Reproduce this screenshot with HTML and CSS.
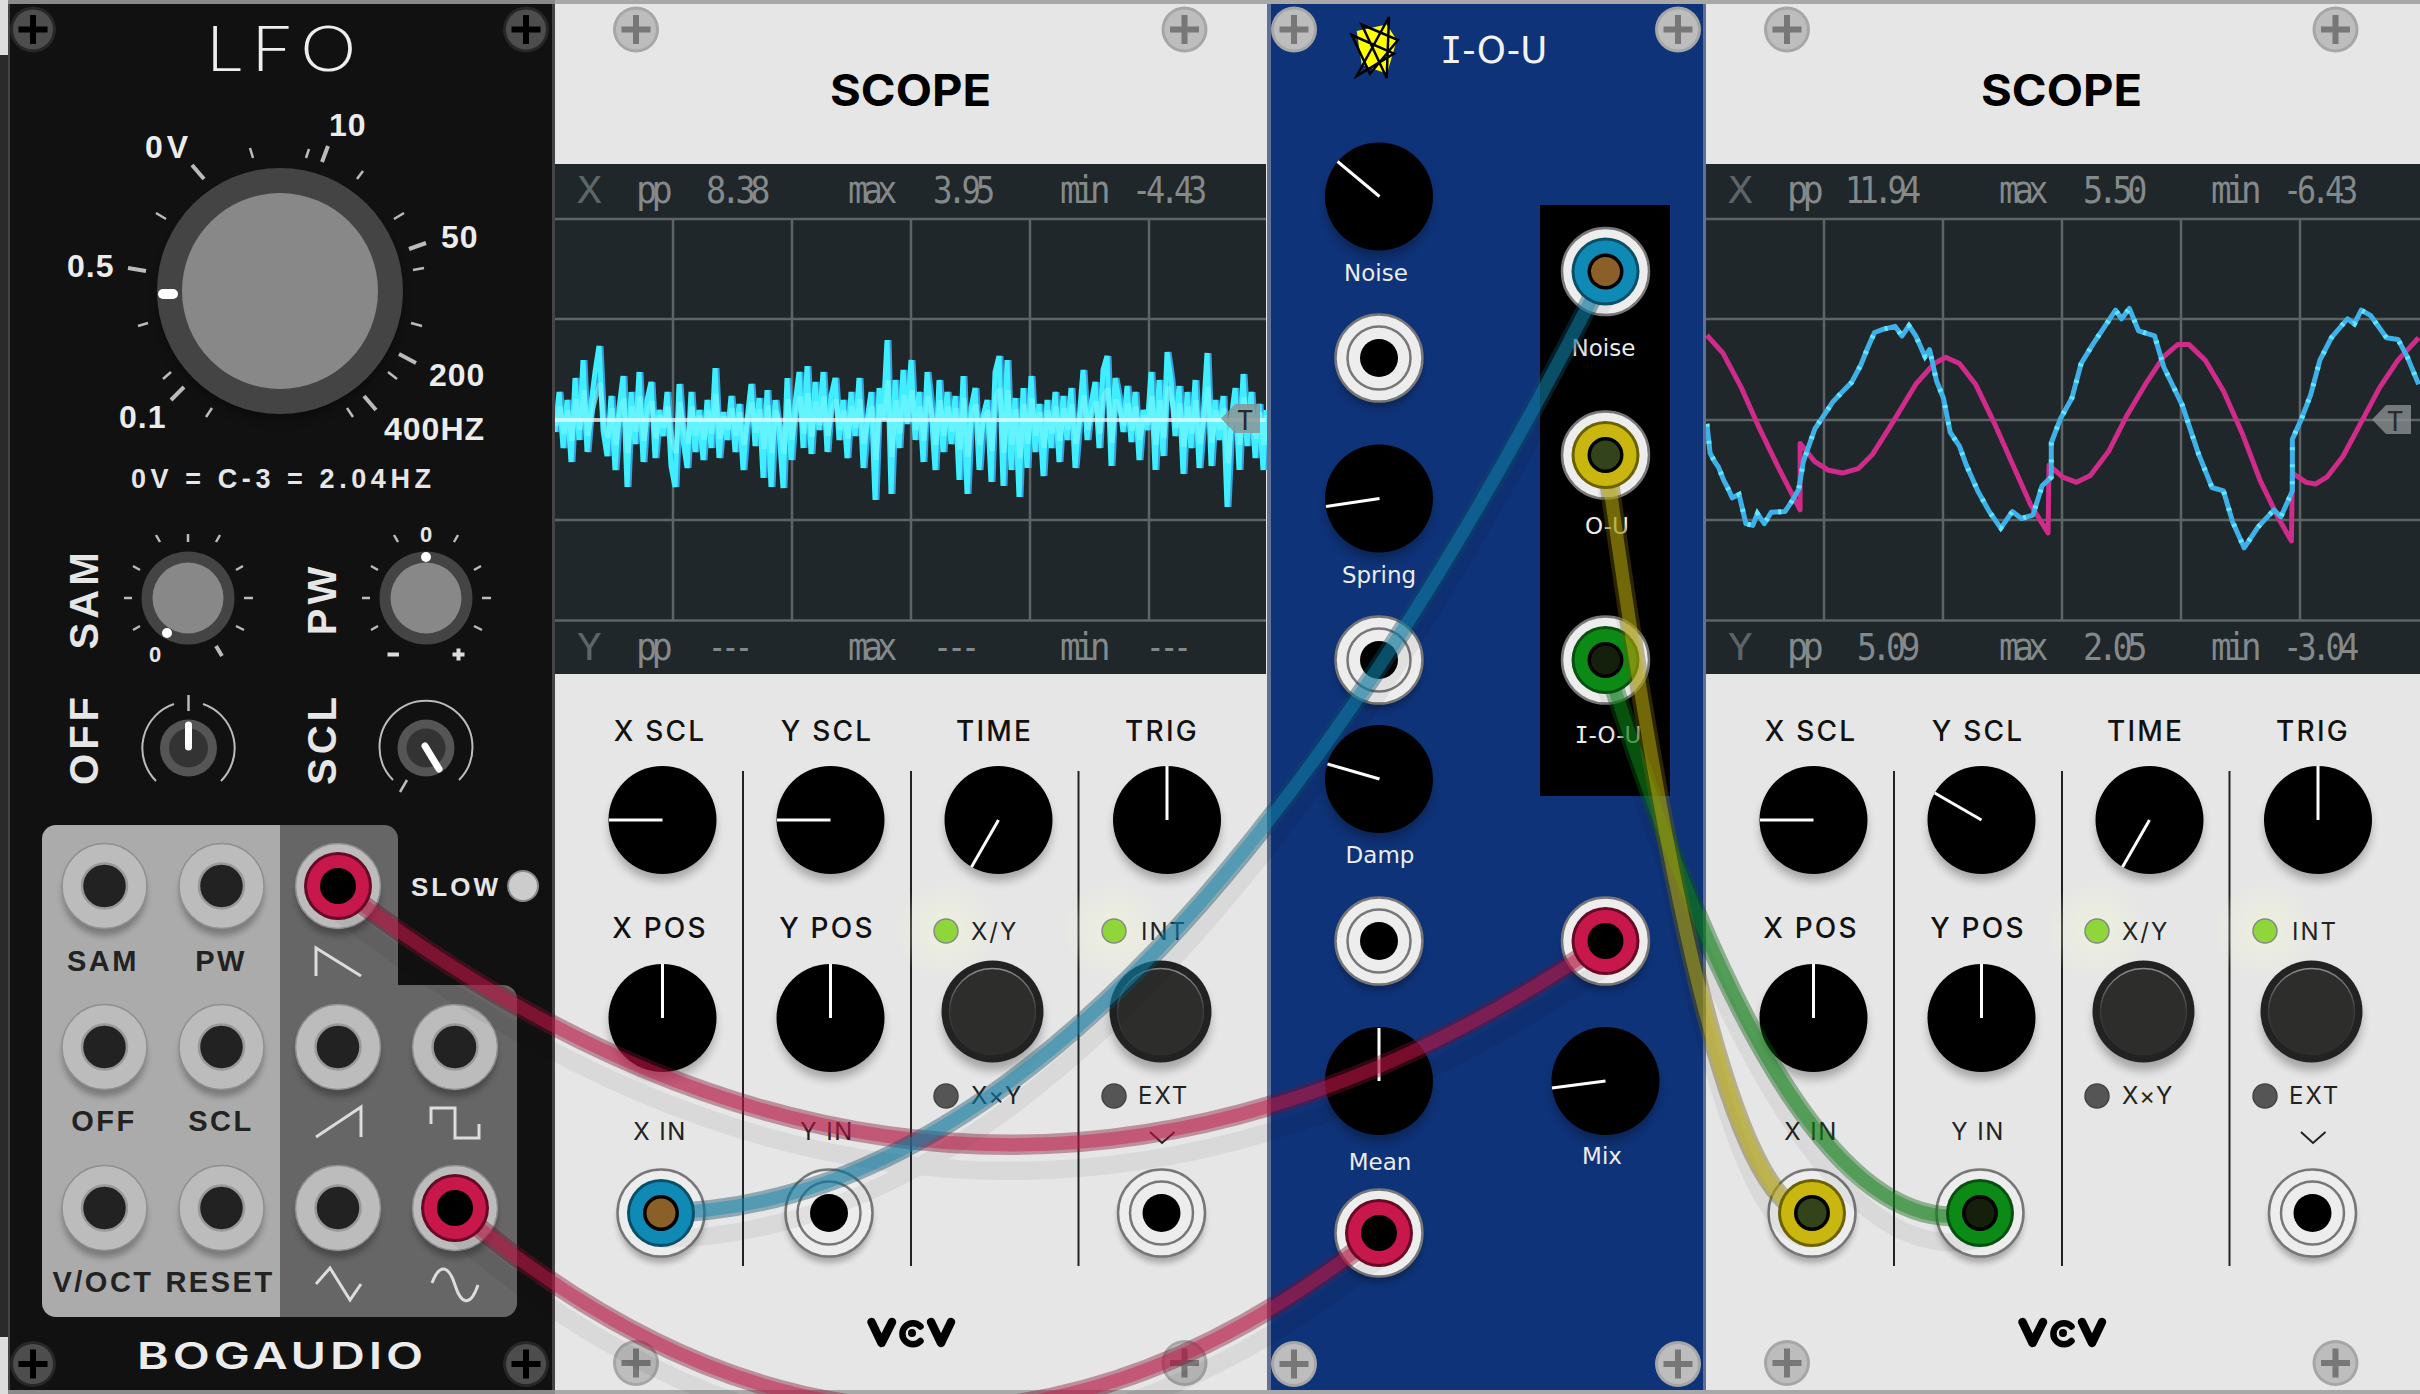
FILE: index.html
```html
<!DOCTYPE html>
<html lang="en">
<head>
<meta charset="utf-8">
<title>VCV Rack patch</title>
<link rel="stylesheet" href="styles.css">
</head>
<body>
<svg class="defs" aria-hidden="true">
  <defs>
    <filter id="blur" x="-40%" y="-40%" width="180%" height="180%"><feGaussianBlur stdDeviation="5"/></filter>
    <filter id="blur2" x="-40%" y="-40%" width="180%" height="180%"><feGaussianBlur stdDeviation="3"/></filter>
    <radialGradient id="glow"><stop offset="0" stop-color="#f2f7d8" stop-opacity=".6"/><stop offset="1" stop-color="#f2f7d8" stop-opacity="0"/></radialGradient>
    <linearGradient id="ring" x1="0" y1="0" x2="0" y2="1"><stop offset="0" stop-color="#8a8a8a"/><stop offset=".5" stop-color="#3a3a3a"/><stop offset="1" stop-color="#2d2e2c"/></linearGradient>
    <g id="screw-dark"><circle class="sd-o" r="23"/><circle class="sd-i" r="20"/><path class="sd-x" d="M-14.500 0H14.500M0-14.500V14.500"/></g>
    <g id="screw-light"><circle class="sl-o" r="23"/><circle class="sl-i" r="20"/><path class="sl-x" d="M-14.500 0H14.500M0-14.500V14.500"/></g>
    <g id="jack-lfo"><circle class="shade" cy="8" r="42" filter="url(#blur2)"/><circle class="jl-o" r="42.500"/><circle class="jl-r" r="22.500"/></g>
    <g id="knob"><circle class="shade" cy="8" r="53" filter="url(#blur)"/><circle class="knob" r="54"/></g>
    <g id="jack"><circle class="shade" cy="7" r="43" filter="url(#blur2)"/><circle class="j-o" r="43.500"/><circle class="j-r" r="31.500"/><circle class="j-h" r="19"/></g>
    <g id="button"><circle class="shade" cy="9" r="50" filter="url(#blur)"/><circle class="b-o" r="51"/><circle class="b-i" r="43" stroke="url(#ring)"/></g>
    <g id="led-on"><circle r="52" fill="url(#glow)"/><circle class="led-on" r="12"/></g>
    <g id="plug-red"><circle class="p-red-e" r="34"/><circle class="p-red" r="31"/><circle class="p-hole" r="18"/></g>
    <g id="plug-blue"><circle class="p-blue-e" r="34"/><circle class="p-blue" r="31"/><circle class="p-hole" r="18"/><circle class="p-brown" r="14.500"/></g>
    <g id="plug-yellow"><circle class="p-yel-e" r="34"/><circle class="p-yel" r="31"/><circle class="p-hole" r="18"/><circle class="p-olive" r="14.500"/></g>
    <g id="plug-green"><circle class="p-grn-e" r="34"/><circle class="p-grn" r="31"/><circle class="p-hole" r="18"/><circle class="p-dk" r="14.500"/></g>
    <g id="vcv"><path class="logo" d="M871.500 1322L881.500 1343L892 1322"/><path class="logo-c" d="M920.500 1326.500A10.500 10.500 0 1 0 920.500 1341"/><circle class="logo-d" cx="912" cy="1333" r="4"/><path class="logo" d="M931 1322L941 1343L951 1322"/></g>
    <polyline id="noise-line" points="555,432 559,392 563,448 567,400 571,462 575,378 579,440 583,360 587,452 591,404 595,372 599,346 603,430 607,456 611,396 615,470 619,408 623,376 627,487 631,392 635,444 639,372 643,462 647,400 651,382 655,458 659,410 663,436 667,392 671,466 675,487 679,384 683,440 687,468 691,392 695,452 699,410 703,460 707,400 711,448 715,368 719,458 723,412 727,440 731,396 735,452 739,404 743,470 747,420 751,384 755,446 759,398 763,478 767,390 771,487 775,400 779,430 783,488 787,378 791,460 795,404 799,372 803,448 807,366 811,454 815,382 819,430 823,372 827,452 831,396 835,378 839,440 843,400 847,458 851,392 855,436 859,378 863,468 867,420 871,392 875,500 879,388 883,420 887,340 891,494 895,380 899,448 903,370 907,424 911,360 915,440 919,392 923,462 927,372 931,408 935,470 939,380 943,452 947,392 951,444 955,396 959,480 963,376 967,494 971,408 975,388 979,470 983,416 987,400 991,482 995,372 999,356 1003,486 1007,360 1011,470 1015,398 1019,497 1023,388 1027,468 1031,376 1035,452 1039,404 1043,476 1047,400 1051,448 1055,392 1059,462 1063,396 1067,440 1071,388 1075,468 1079,420 1083,370 1087,440 1091,404 1095,382 1099,448 1103,370 1107,356 1111,466 1115,378 1119,400 1123,432 1127,386 1131,442 1135,392 1139,460 1143,410 1147,430 1151,372 1155,470 1159,380 1163,456 1167,352 1171,380 1175,436 1179,386 1183,474 1187,392 1191,448 1195,380 1199,468 1203,420 1207,353 1211,466 1215,400 1219,440 1223,396 1227,507 1231,420 1235,388 1239,470 1243,374 1247,446 1251,392 1255,458 1259,404 1263,470 1266,410"/>
  </defs>
</svg>

<main class="rack">
  <section class="module lfo">
    <svg class="panel" viewBox="8 0 547 1394" width="547" height="1394">
      <use href="#screw-dark" x="33" y="29.500"/><use href="#screw-dark" x="526" y="29.500"/>
      <use href="#screw-dark" x="33" y="1364"/><use href="#screw-dark" x="526" y="1364"/>
      <text class="t-title" x="206" y="71" textLength="160" lengthAdjust="spacingAndGlyphs">LFO</text>
      <path class="tick" d="M250 148L253 158M309 149L306 158M363 171L357 179M404 213L394 219M424 268L413 270M422 326L411 323M397 379L388 372M353 417L347 408M212 408L206 417M171 372L163 379M148 323L138 326M166 219L156 213"/>
      <path class="tick-m" d="M192 165L204 179M328 146L322 162M426 243L409 249M416 363L399 354M376 410L364 396M184 387L171 400M146 271L128 268"/>
      <circle class="shade" cx="280" cy="299" r="122" filter="url(#blur)"/>
      <circle class="k-o" cx="280" cy="291" r="123"/><circle class="k-i" cx="280" cy="291" r="98"/>
      <rect class="k-p" x="158" y="289" width="20" height="10" rx="5"/>
      <text class="t-lab" x="145" y="158" textLength="44">0V</text><text class="t-lab" x="329" y="136">10</text>
      <text class="t-lab" x="67" y="277">0.5</text><text class="t-lab" x="441" y="248">50</text>
      <text class="t-lab" x="429" y="386">200</text><text class="t-lab" x="119" y="428">0.1</text>
      <text class="t-lab" x="384" y="440">400HZ</text>
      <text class="t-eq" x="131" y="488" textLength="300">0V = C-3 = 2.04HZ</text>

      <text class="t-side" transform="translate(98 599) rotate(-90)">SAM</text>
      <text class="t-side" transform="translate(336 599) rotate(-90)">PW</text>
      <text class="t-side" transform="translate(98 739) rotate(-90)">OFF</text>
      <text class="t-side" transform="translate(336 739) rotate(-90)">SCL</text>

      <path class="tick" d="M188 534V542M216 542L220 535M236 570L243 566M244 598H253M236 626L244 630M160 542L156 535M140 570L133 566M132 598H124M140 626L133 630"/>
      <path class="tick-m" d="M216 646L222 656"/>
      <circle class="k-o" cx="188" cy="598" r="46.500"/><circle class="k-i" cx="188" cy="598" r="35.500"/>
      <circle class="k-dot" cx="167" cy="633" r="5"/>
      <text class="t-s" x="155" y="662">0</text>

      <path class="tick" d="M454 542L458 535M474 570L481 566M482 598H491M474 626L482 630M398 542L394 535M378 570L371 566M370 598H362M378 626L371 630"/>
      <circle class="k-o" cx="426" cy="598" r="46.500"/><circle class="k-i" cx="426" cy="598" r="35.500"/>
      <circle class="k-dot" cx="426" cy="557" r="5"/>
      <text class="t-s" x="426" y="542">0</text>
      <path class="t-pm" d="M387.500 654.500H399M452.500 654.500H464.500M458.500 648.500V660.500"/>

      <path class="arc" d="M174 704A46.500 46.500 0 0 0 156 781M203 704A46.500 46.500 0 0 1 221 781"/>
      <path class="tick" d="M188.500 695V711M407 780L400 792"/>
      <circle class="m-o" cx="188.500" cy="748" r="28.500"/><circle class="m-i" cx="188.500" cy="748" r="19.500"/>
      <path class="m-p" d="M188.500 725V747"/>
      <path class="arc" d="M393 780A46.500 46.500 0 1 1 459 780"/>
      <circle class="m-o" cx="426" cy="748" r="28.500"/><circle class="m-i" cx="426" cy="748" r="19.500"/>
      <path class="m-p" d="M425 746L439 769"/>

      <path class="area-l" d="M56 825H280V1317H56A14 14 0 0 1 42 1303V839A14 14 0 0 1 56 825Z"/>
      <path class="area-d" d="M280 825H384A14 14 0 0 1 398 839V985H503A14 14 0 0 1 517 999V1303A14 14 0 0 1 503 1317H280Z"/>
      <use href="#jack-lfo" x="104.500" y="886"/><use href="#jack-lfo" x="221.500" y="886"/><use href="#jack-lfo" x="338" y="886"/>
      <use href="#jack-lfo" x="104.500" y="1047"/><use href="#jack-lfo" x="221.500" y="1047"/><use href="#jack-lfo" x="338" y="1047"/><use href="#jack-lfo" x="455" y="1047"/>
      <use href="#jack-lfo" x="104.500" y="1208"/><use href="#jack-lfo" x="221.500" y="1208"/><use href="#jack-lfo" x="338" y="1208"/><use href="#jack-lfo" x="455" y="1208"/>
      <text class="t-port" x="103" y="971">SAM</text><text class="t-port" x="221" y="971">PW</text>
      <text class="t-port" x="104" y="1131">OFF</text><text class="t-port" x="221" y="1131">SCL</text>
      <text class="t-port" x="103" y="1292">V/OCT</text><text class="t-port" x="220" y="1292">RESET</text>
      <path class="wave" d="M316 976V948L361 976"/>
      <path class="wave" d="M316 1137L361 1107V1137"/>
      <path class="wave" d="M431 1124V1108H455V1138H479V1124"/>
      <path class="wave" d="M316 1284L330 1268L350 1300L361 1284"/>
      <path class="wave" d="M432 1283C440 1262 449 1266 455 1285C461 1304 470 1308 478 1285"/>
      <text class="t-slow" x="411" y="896">SLOW</text>
      <circle class="slow" cx="523" cy="886" r="15"/>
      <text class="t-brand" x="137" y="1369" textLength="290" lengthAdjust="spacingAndGlyphs">BOGAUDIO</text>
    </svg>
  </section>

  <section class="module scope">
    <svg class="panel" viewBox="555 0 712 1394" width="712" height="1394">
      <use href="#screw-light" x="636" y="29.500"/><use href="#screw-light" x="1184.500" y="29.500"/>
      <use href="#screw-light" x="636" y="1363"/><use href="#screw-light" x="1184.500" y="1363"/>
      <text class="t-scope" x="910.500" y="106" text-anchor="middle" textLength="161" lengthAdjust="spacingAndGlyphs">SCOPE</text>
      <rect class="screen" x="555" y="164" width="711" height="510"/>
      <path class="grid" d="M555 219H1266M555 319H1266M555 420H1266M555 520H1266M555 620.500H1266M673 219V620M792 219V620M911 219V620M1030 219V620M1149 219V620"/>
      <use href="#noise-line" class="noise-b" transform="translate(2.500 0)"/>
      <use href="#noise-line" class="noise"/>
      <use href="#noise-line" class="noise-l" transform="translate(1 210) scale(1 .5)"/>
      <path class="mid" d="M555 420H1266"/>
      <path class="marker" d="M1260 404V433H1235L1221 418.500L1235 404Z"/>
      <text class="t-t" x="1245" y="430">T</text>
      <text class="t-d dim" x="577" y="203" textLength="18" lengthAdjust="spacingAndGlyphs">X</text>
      <text class="t-d" x="636" y="203" textLength="31" lengthAdjust="spacingAndGlyphs">pp</text>
      <text class="t-d" x="706" y="203" textLength="59" lengthAdjust="spacingAndGlyphs">8.38</text>
      <text class="t-d" x="848" y="203" textLength="44" lengthAdjust="spacingAndGlyphs">max</text>
      <text class="t-d" x="933" y="203" textLength="57" lengthAdjust="spacingAndGlyphs">3.95</text>
      <text class="t-d" x="1060" y="203" textLength="45" lengthAdjust="spacingAndGlyphs">min</text>
      <text class="t-d" x="1132" y="203" textLength="70" lengthAdjust="spacingAndGlyphs">-4.43</text>
      <text class="t-d dim" x="577" y="660" textLength="18" lengthAdjust="spacingAndGlyphs">Y</text>
      <text class="t-d" x="636" y="660" textLength="31" lengthAdjust="spacingAndGlyphs">pp</text>
      <text class="t-d" x="708" y="660" textLength="40" lengthAdjust="spacingAndGlyphs">---</text>
      <text class="t-d" x="848" y="660" textLength="44" lengthAdjust="spacingAndGlyphs">max</text>
      <text class="t-d" x="933" y="660" textLength="42" lengthAdjust="spacingAndGlyphs">---</text>
      <text class="t-d" x="1060" y="660" textLength="45" lengthAdjust="spacingAndGlyphs">min</text>
      <text class="t-d" x="1146" y="660" textLength="41" lengthAdjust="spacingAndGlyphs">---</text>

      <path class="div" d="M743 771V1266M911 771V1266M1078.500 771V1266"/>
      <text class="t-h" x="660" y="741">X SCL</text><text class="t-h" x="827" y="741">Y SCL</text><text class="t-h" x="994.500" y="741">TIME</text><text class="t-h" x="1162" y="741">TRIG</text>
      <use href="#knob" x="662.500" y="820"/><line class="ptr" x1="662.500" y1="820" x2="609" y2="820"/>
      <use href="#knob" x="830.500" y="820"/><line class="ptr" x1="830.500" y1="820" x2="777" y2="820"/>
      <use href="#knob" x="998.500" y="820"/><line class="ptr" x1="998.500" y1="820" x2="971.500" y2="867"/>
      <use href="#knob" x="1167" y="820"/><line class="ptr" x1="1167" y1="820" x2="1167" y2="766"/>
      <text class="t-h" x="660" y="938">X POS</text><text class="t-h" x="827" y="938">Y POS</text>
      <use href="#knob" x="662.500" y="1018"/><line class="ptr" x1="662.500" y1="1018" x2="662.500" y2="964"/>
      <use href="#knob" x="830.500" y="1018"/><line class="ptr" x1="830.500" y1="1018" x2="830.500" y2="964"/>
      <use href="#led-on" x="946" y="931"/><use href="#led-on" x="1114" y="931"/>
      <text class="t-m" x="971" y="940">X/Y</text><text class="t-m" x="1141" y="940">INT</text>
      <use href="#button" x="992.500" y="1011.500"/><use href="#button" x="1160.500" y="1011.500"/>
      <circle class="led-off" cx="946" cy="1096" r="12"/><circle class="led-off" cx="1114" cy="1096" r="12"/>
      <text class="t-m" x="971" y="1104">X×Y</text><text class="t-m" x="1138" y="1104">EXT</text>
      <text class="t-i" x="660" y="1140">X IN</text><text class="t-i" x="827" y="1140">Y IN</text>
      <path class="chev" d="M1150 1132L1162 1143L1174.500 1132"/>
      <use href="#jack" x="661" y="1213"/><use href="#jack" x="829" y="1213"/><use href="#jack" x="1161.500" y="1213"/>
      <use href="#vcv"/>
    </svg>
  </section>

  <section class="module iou">
    <svg class="panel" viewBox="1267 0 439 1394" width="439" height="1394">
      <use href="#screw-light" x="1294" y="29.500"/><use href="#screw-light" x="1678" y="29.500"/>
      <use href="#screw-light" x="1294" y="1364"/><use href="#screw-light" x="1678" y="1364"/>
      <polygon class="star-y" points="1356.700,31 1386.700,24.500 1396.700,40 1387,73.700 1361.700,64.700"/>
      <polygon class="star-l" points="1351.700,35 1394,53.600 1356.700,76 1389,17 1386.700,78 1361.700,24.500 1398,40 1370,73.700"/>
      <text class="t-iou" x="1440" y="62.500"><tspan class="mono">I</tspan>-O-U</text>
      <rect class="out" x="1540" y="205" width="130" height="591"/>
      <use href="#knob" x="1379" y="196.500"/><line class="ptr" x1="1379.500" y1="196.500" x2="1337.500" y2="161.500"/>
      <text class="t-v" x="1376" y="281">Noise</text>
      <use href="#jack" x="1379" y="358"/>
      <use href="#knob" x="1379" y="498.500"/><line class="ptr" x1="1379.500" y1="498.500" x2="1326" y2="506.500"/>
      <text class="t-v" x="1379" y="582.500">Spring</text>
      <use href="#jack" x="1379" y="660"/>
      <use href="#knob" x="1379" y="779"/><line class="ptr" x1="1379.500" y1="779" x2="1327.500" y2="764"/>
      <text class="t-v" x="1380" y="863">Damp</text>
      <use href="#jack" x="1379" y="941"/>
      <use href="#knob" x="1379" y="1081"/><line class="ptr" x1="1379" y1="1081" x2="1379" y2="1028"/>
      <text class="t-v" x="1380" y="1170">Mean</text>
      <use href="#jack" x="1379" y="1233"/>
      <use href="#knob" x="1605.500" y="1081"/><line class="ptr" x1="1605.500" y1="1081" x2="1552" y2="1088"/>
      <text class="t-v" x="1602" y="1164">Mix</text>
      <use href="#jack" x="1605.500" y="271.500"/><use href="#jack" x="1605.500" y="455"/><use href="#jack" x="1605.500" y="660"/><use href="#jack" x="1605.500" y="941"/>
      <text class="t-v" x="1603.500" y="356">Noise</text>
      <text class="t-v" x="1607" y="534">O-U</text>
      <text class="t-v" x="1608" y="743"><tspan class="mono">I</tspan>-O-U</text>
    </svg>
  </section>

  <section class="module scope">
    <svg class="panel" viewBox="555 0 714 1394" width="714" height="1394">
      <use href="#screw-light" x="636" y="29.500"/><use href="#screw-light" x="1184.500" y="29.500"/>
      <use href="#screw-light" x="636" y="1363"/><use href="#screw-light" x="1184.500" y="1363"/>
      <text class="t-scope" x="910.500" y="106" text-anchor="middle" textLength="161" lengthAdjust="spacingAndGlyphs">SCOPE</text>
      <rect class="screen" x="555" y="164" width="714" height="510"/>
      <path class="grid" d="M555 219H1269M555 319H1269M555 420H1269M555 520H1269M555 620.500H1269M673 219V620M792 219V620M911 219V620M1030 219V620M1149 219V620"/>
      <g transform="translate(549 150) scale(.4592 .3444)">
        <polyline class="pink" points="15,538 50,590 90,690 130,810 170,920 218,1045 218,852 250,905 280,930 310,938 345,925 375,885 420,790 470,680 510,620 535,602 565,620 600,680 640,790 680,910 720,1030 758,1112 760,915 790,950 820,965 850,945 890,875 930,770 970,680 1010,600 1040,565 1065,565 1100,610 1140,700 1180,820 1220,960 1260,1070 1288,1135 1290,938 1320,965 1340,970 1365,950 1400,890 1440,790 1480,690 1520,610 1565,545"/>
        <polyline class="trace" points="15,795 22,880 32,905 40,920 52,960 60,980 70,1010 85,1000 100,1085 115,1090 125,1055 140,1085 155,1052 185,1050 200,1020 215,985 225,905 250,810 265,780 290,730 315,695 330,675 350,625 365,575 380,530 400,520 425,512 440,540 455,510 470,540 490,600 500,580 515,670 530,720 545,820 565,860 580,915 605,990 630,1050 655,1098 680,1050 700,1070 725,1060 745,975 765,950 765,850 785,780 810,720 830,620 855,565 880,515 905,465 918,490 935,460 955,525 990,540 1010,630 1050,740 1085,880 1115,980 1140,990 1160,1080 1185,1155 1215,1095 1250,1045 1265,1065 1290,990 1290,840 1310,780 1330,710 1350,610 1375,545 1410,490 1425,505 1440,465 1460,480 1495,545 1520,550 1540,600 1565,680"/>
        <polyline class="trace-f" points="15,795 22,880 32,905 40,920 52,960 60,980 70,1010 85,1000 100,1085 115,1090 125,1055 140,1085 155,1052 185,1050 200,1020 215,985 225,905 250,810 265,780 290,730 315,695 330,675 350,625 365,575 380,530 400,520 425,512 440,540 455,510 470,540 490,600 500,580 515,670 530,720 545,820 565,860 580,915 605,990 630,1050 655,1098 680,1050 700,1070 725,1060 745,975 765,950 765,850 785,780 810,720 830,620 855,565 880,515 905,465 918,490 935,460 955,525 990,540 1010,630 1050,740 1085,880 1115,980 1140,990 1160,1080 1185,1155 1215,1095 1250,1045 1265,1065 1290,990 1290,840 1310,780 1330,710 1350,610 1375,545 1410,490 1425,505 1440,465 1460,480 1495,545 1520,550 1540,600 1565,680"/>
      </g>
      <path class="marker" d="M1260 405V434H1235L1221 419.500L1235 405Z"/>
      <text class="t-t" x="1244" y="431">T</text>
      <text class="t-d dim" x="577" y="203" textLength="18" lengthAdjust="spacingAndGlyphs">X</text>
      <text class="t-d" x="636" y="203" textLength="31" lengthAdjust="spacingAndGlyphs">pp</text>
      <text class="t-d" x="694" y="203" textLength="71" lengthAdjust="spacingAndGlyphs">11.94</text>
      <text class="t-d" x="848" y="203" textLength="44" lengthAdjust="spacingAndGlyphs">max</text>
      <text class="t-d" x="932" y="203" textLength="59" lengthAdjust="spacingAndGlyphs">5.50</text>
      <text class="t-d" x="1060" y="203" textLength="45" lengthAdjust="spacingAndGlyphs">min</text>
      <text class="t-d" x="1132" y="203" textLength="70" lengthAdjust="spacingAndGlyphs">-6.43</text>
      <text class="t-d dim" x="577" y="660" textLength="18" lengthAdjust="spacingAndGlyphs">Y</text>
      <text class="t-d" x="636" y="660" textLength="31" lengthAdjust="spacingAndGlyphs">pp</text>
      <text class="t-d" x="706" y="660" textLength="58" lengthAdjust="spacingAndGlyphs">5.09</text>
      <text class="t-d" x="848" y="660" textLength="44" lengthAdjust="spacingAndGlyphs">max</text>
      <text class="t-d" x="932" y="660" textLength="59" lengthAdjust="spacingAndGlyphs">2.05</text>
      <text class="t-d" x="1060" y="660" textLength="45" lengthAdjust="spacingAndGlyphs">min</text>
      <text class="t-d" x="1132" y="660" textLength="71" lengthAdjust="spacingAndGlyphs">-3.04</text>

      <path class="div" d="M743 771V1266M911 771V1266M1078.500 771V1266"/>
      <text class="t-h" x="660" y="741">X SCL</text><text class="t-h" x="827" y="741">Y SCL</text><text class="t-h" x="994.500" y="741">TIME</text><text class="t-h" x="1162" y="741">TRIG</text>
      <use href="#knob" x="662.500" y="820"/><line class="ptr" x1="662.500" y1="820" x2="609" y2="820"/>
      <use href="#knob" x="830.500" y="820"/><line class="ptr" x1="830.500" y1="820" x2="783.700" y2="793"/>
      <use href="#knob" x="998.500" y="820"/><line class="ptr" x1="998.500" y1="820" x2="971.500" y2="867"/>
      <use href="#knob" x="1167" y="820"/><line class="ptr" x1="1167" y1="820" x2="1167" y2="766"/>
      <text class="t-h" x="660" y="938">X POS</text><text class="t-h" x="827" y="938">Y POS</text>
      <use href="#knob" x="662.500" y="1018"/><line class="ptr" x1="662.500" y1="1018" x2="662.500" y2="964"/>
      <use href="#knob" x="830.500" y="1018"/><line class="ptr" x1="830.500" y1="1018" x2="830.500" y2="964"/>
      <use href="#led-on" x="946" y="931"/><use href="#led-on" x="1114" y="931"/>
      <text class="t-m" x="971" y="940">X/Y</text><text class="t-m" x="1141" y="940">INT</text>
      <use href="#button" x="992.500" y="1011.500"/><use href="#button" x="1160.500" y="1011.500"/>
      <circle class="led-off" cx="946" cy="1096" r="12"/><circle class="led-off" cx="1114" cy="1096" r="12"/>
      <text class="t-m" x="971" y="1104">X×Y</text><text class="t-m" x="1138" y="1104">EXT</text>
      <text class="t-i" x="660" y="1140">X IN</text><text class="t-i" x="827" y="1140">Y IN</text>
      <path class="chev" d="M1150 1132L1162 1143L1174.500 1132"/>
      <use href="#jack" x="661" y="1213"/><use href="#jack" x="829" y="1213"/><use href="#jack" x="1161.500" y="1213"/>
      <use href="#vcv"/>
    </svg>
  </section>

  <svg class="cables" viewBox="0 0 2420 1394" width="2420" height="1394" aria-hidden="true">
    <g class="cable-shadow">
      <path d="M338 886Q971.500 1374.500 1605.500 941"/>
      <path d="M455 1208Q917 1600 1379 1233"/>
      <path d="M661 1213Q1133 1207 1605.500 271.500"/>
      <path d="M1605.500 660Q1793 1260 1980 1213"/>
      <path d="M1605.500 455Q1709 1216 1812 1213"/>
    </g>
    <g class="cable red"><path class="edge" d="M338 886Q971.500 1374.500 1605.500 941"/><path class="core" d="M338 886Q971.500 1374.500 1605.500 941"/></g>
    <g class="cable red"><path class="edge" d="M455 1208Q917 1600 1379 1233"/><path class="core" d="M455 1208Q917 1600 1379 1233"/></g>
    <use href="#plug-red" x="338" y="886"/><use href="#plug-red" x="1605.500" y="941"/>
    <use href="#plug-red" x="455" y="1208"/><use href="#plug-red" x="1379" y="1233"/>
    <g class="cable blue"><path class="edge" d="M661 1213Q1133 1207 1605.500 271.500"/><path class="core" d="M661 1213Q1133 1207 1605.500 271.500"/></g>
    <use href="#plug-blue" x="661" y="1213"/><use href="#plug-blue" x="1605.500" y="271.500"/>
    <g class="cable green"><path class="edge" d="M1605.500 660Q1793 1260 1980 1213"/><path class="core" d="M1605.500 660Q1793 1260 1980 1213"/></g>
    <use href="#plug-green" x="1605.500" y="660"/><use href="#plug-green" x="1980" y="1213"/>
    <g class="cable yellow"><path class="edge" d="M1605.500 455Q1709 1216 1812 1213"/><path class="core" d="M1605.500 455Q1709 1216 1812 1213"/></g>
    <use href="#plug-yellow" x="1605.500" y="455"/><use href="#plug-yellow" x="1812" y="1213"/>
  </svg>
</main>
</body>
</html>
```

FILE: styles.css
```css
html, body { margin: 0; padding: 0; background: #2a2a2a; overflow: hidden; }
.defs { position: absolute; width: 0; height: 0; }
.rack { position: relative; display: flex; width: 2420px; height: 1394px; padding-left: 8px; box-sizing: border-box; background: linear-gradient(#ddd 55px, #2a2a2a 55px, #2a2a2a 1337px, #ddd 1337px); }
.module { flex: none; height: 1394px; box-shadow: inset 0 4px 0 #a8a8a8, inset 0 -4px 0 #a8a8a8; }
.panel { display: block; }
.lfo { background: #111; box-shadow: inset 0 4px 0 #8a8a8a, inset 0 -4px 0 #8a8a8a, inset 2px 0 0 #444, inset -3px 0 0 #444; }
.scope { background: #e6e6e6; }
.iou { background: #0f3379; box-shadow: inset 0 4px 0 #a8a8a8, inset 0 -4px 0 #a8a8a8, inset 4px 0 0 #5f7196, inset -3px 0 0 #5f7196; }
.cables { position: absolute; left: 0; top: 0; pointer-events: none; }

text { font-family: "Liberation Sans", Arial, sans-serif; }
.shade { fill: #000; opacity: .28; }
.sd-o { fill: #272727; } .sd-i { fill: #4d4d4d; } .sd-x { stroke: #000; stroke-width: 6; fill: none; }
.sl-o { fill: #a6a6a6; } .sl-i { fill: #bdbdbd; } .sl-x { stroke: #777; stroke-width: 6; fill: none; }

.t-title { font-family: Lato, sans-serif; font-weight: 300; font-size: 63px; fill: #eee; letter-spacing: 9px; }
.t-lab { font-weight: 700; font-size: 32px; fill: #ececec; letter-spacing: 1px; }
.t-eq { font-weight: 700; font-size: 27px; fill: #e6e6e6; }
.t-s { font-weight: 700; font-size: 22px; fill: #e6e6e6; text-anchor: middle; }
.t-side { font-weight: 700; font-size: 40px; fill: #e6e6e6; letter-spacing: 4px; text-anchor: middle; }
.t-port { font-weight: 700; font-size: 29px; fill: #222; letter-spacing: 2.500px; text-anchor: middle; }
.t-slow { font-weight: 700; font-size: 26px; fill: #e6e6e6; letter-spacing: 3px; }
.t-brand { font-family: Inter, sans-serif; font-weight: 600; font-size: 37px; fill: #ececec; letter-spacing: 3px; }
.tick { stroke: #bbb; stroke-width: 2.500; fill: none; }
.tick-m { stroke: #bbb; stroke-width: 4; fill: none; }
.k-o { fill: #444; } .k-i { fill: #888; } .k-p { fill: #fff; } .k-dot { fill: #fff; }
.t-pm { stroke: #ddd; stroke-width: 4; fill: none; }
.arc { stroke: #bbb; stroke-width: 2; fill: none; }
.m-o { fill: #555; } .m-i { fill: #333; } .m-p { stroke: #fff; stroke-width: 7; stroke-linecap: round; fill: none; }
.area-l { fill: #ababab; } .area-d { fill: #666; }
.jl-o { fill: #bcbcbc; stroke: #8f8f8f; stroke-width: 1.500; } .jl-r { fill: #222; stroke: #999; stroke-width: 2.500; }
.wave { stroke: #dcdcdc; stroke-width: 3; fill: none; }
.slow { fill: #ccc; stroke: #888; stroke-width: 2; }

.t-scope { font-family: Inter, sans-serif; font-weight: 700; font-size: 44px; fill: #000; }
.screen { fill: #1f272a; }
.grid { stroke: #5e6466; stroke-width: 2.500; fill: none; }
.noise, .noise-b, .noise-l { fill: none; stroke-linejoin: bevel; vector-effect: non-scaling-stroke; }
.noise { stroke: #3fefff; stroke-width: 5; }
.noise-b { stroke: #3a9fe0; stroke-width: 4; }
.noise-l { stroke: #74f6ff; stroke-width: 5; opacity: .7; }
.mid { stroke: #f0ffff; stroke-width: 4; opacity: .7; }
.marker { fill: #8a8f90; opacity: .8; }
.t-t { font-family: "DejaVu Sans Mono", monospace; font-size: 26px; fill: #2a2a2a; text-anchor: middle; }
.t-d { font-family: "DejaVu Sans Mono", monospace; font-size: 37px; fill: #84898a; letter-spacing: -6px; }
.dim { fill: #5e6567; }
.pink { fill: none; stroke: #cf2b8a; stroke-width: 5; vector-effect: non-scaling-stroke; stroke-linejoin: round; }
.trace { fill: none; stroke: #3fb0e8; stroke-width: 5; vector-effect: non-scaling-stroke; stroke-linejoin: round; }
.trace-f { fill: none; stroke: #62e8ff; stroke-width: 5; stroke-dasharray: 3 14; vector-effect: non-scaling-stroke; }
.div { stroke: #222; stroke-width: 2; fill: none; }
.t-h { font-family: Inter, sans-serif; font-weight: 500; font-size: 28px; fill: #111; text-anchor: middle; letter-spacing: 2.200px; }
.t-m { font-family: Inter, sans-serif; font-weight: 400; font-size: 24px; fill: #222; letter-spacing: 2px; }
.t-i { font-family: Inter, sans-serif; font-weight: 400; font-size: 24px; fill: #222; text-anchor: middle; letter-spacing: 1.500px; }
.knob { fill: #000; }
.ptr { stroke: #fff; stroke-width: 3; }
.led-on { fill: #8fd63a; stroke: #888; stroke-width: 1.500; }
.led-off { fill: #555; stroke: #444; stroke-width: 1.500; }
.b-o { fill: #222; } .b-i { fill: #2d2e2c; stroke-width: 1.500; }
.chev { stroke: #222; stroke-width: 2; fill: none; }
.j-o { fill: #ededed; stroke: #777; stroke-width: 2.500; } .j-r { fill: #ededed; stroke: #777; stroke-width: 2.500; } .j-h { fill: #000; }
.logo { stroke: #000; stroke-width: 8.500; fill: none; stroke-linejoin: round; stroke-linecap: round; }
.logo-c { stroke: #000; stroke-width: 6.500; fill: none; stroke-linecap: round; } .logo-d { fill: #000; }

.t-iou { font-family: "DejaVu Sans", sans-serif; font-size: 37px; fill: #f2f2f2; }
.mono { font-family: "DejaVu Sans Mono", monospace; }
.t-v { font-family: "DejaVu Sans", sans-serif; font-size: 23px; fill: #ececec; text-anchor: middle; }
.out { fill: #000; }
.star-y { fill: #ffff00; }
.star-l { fill: none; stroke: #000; stroke-width: 2.500; }

.cable { fill: none; }
.cable-shadow { fill: none; stroke: #000; stroke-width: 18; opacity: .05; transform: translateY(26px); }
.edge { stroke-width: 20; opacity: .4; }
.core { stroke-width: 13; opacity: .46; }
.red .edge { stroke: #7c0d2e; } .red .core { stroke: #c8174a; }
.blue .edge { stroke: #0a4a64; } .blue .core { stroke: #0f8ab4; }
.green .edge { stroke: #0a5a10; } .green .core { stroke: #0c8a16; }
.yellow .edge { stroke: #6b6000; } .yellow .core { stroke: #c9b70f; }
.p-hole { fill: #000; }
.p-red-e { fill: #680826; } .p-red { fill: #c8174a; }
.p-blue-e { fill: #0a4f6a; } .p-blue { fill: #0f8ab4; } .p-brown { fill: #8b5f28; }
.p-yel-e { fill: #6c6000; } .p-yel { fill: #c9b70f; } .p-olive { fill: #33431a; }
.p-grn-e { fill: #084f10; } .p-grn { fill: #0c8a16; } .p-dk { fill: #141f0c; }
```
